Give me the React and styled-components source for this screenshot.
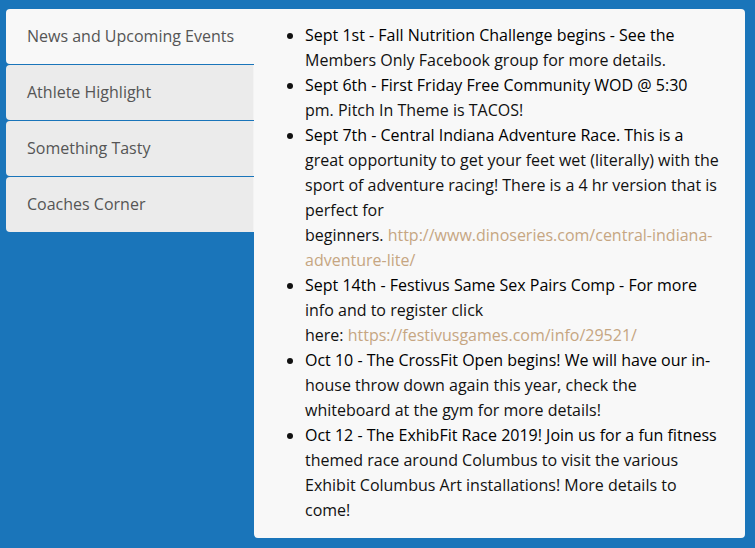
import React, { useState } from 'react'
import styled, { createGlobalStyle } from 'styled-components';

const GlobalStyle = createGlobalStyle`
  html, body {
    margin: 0;
    padding: 0;
    background: #1a75ba;
  }
  body {
    font-family: "Open Sans", "Noto Sans", sans-serif;
  }
`;

const Wrapper = styled.div`
  display: flex;
  align-items: flex-start;
  padding: 9px 10px 10px 6px;
  width: 755px;
  height: 548px;
  box-sizing: border-box;
`;

const TabList = styled.ul`
  list-style: none;
  margin: 0;
  padding: 0;
  width: 248px;
  flex-shrink: 0;
  display: flex;
  flex-direction: column;
  gap: 1px;
`;

const Tab = styled.li`
  height: 55px;
  display: flex;
  align-items: center;
  padding-left: 21px;
  padding-bottom: 1px;
  box-sizing: border-box;
  border-radius: 4px 0 0 4px;
  background: ${props => (props.$active ? '#f8f8f8' : '#ebebeb')};
  border-right: 1px solid ${props => (props.$active ? '#f8f8f8' : '#f3f3f3')};
  color: #555;
  font-size: 16px;
  cursor: pointer;
`;

const Panel = styled.div`
  flex: 1;
  background: #f8f8f8;
  border-radius: 0 4px 4px 4px;
  padding: 14px 26px 14px 51px;
  box-sizing: border-box;
  align-self: stretch;
`;

const EventList = styled.ul`
  margin: 0;
  padding: 0;
  list-style: disc outside;
  color: #111;
  font-size: 16px;
  line-height: 25px;
`;

const EventItem = styled.li`
  &::first-line {
    color: #000;
  }
`;

const Link = styled.a`
  color: #c6a682;
  text-decoration: none;
`;

const tabs = ['News and Upcoming Events', 'Athlete Highlight', 'Something Tasty', 'Coaches Corner'];

export default function App() {
  const [active, setActive] = useState(0);
  return (
    <>
      <GlobalStyle />
      <Wrapper>
        <TabList>
          {tabs.map((t, i) => (
            <Tab key={t} $active={i === active} onClick={() => setActive(i)}>{t}</Tab>
          ))}
        </TabList>
        <Panel>
          <EventList>
            <EventItem>Sept 1st - Fall Nutrition Challenge begins - See the Members Only Facebook group for more details.</EventItem>
            <EventItem>Sept 6th - First Friday Free Community WOD @ 5:30 pm. Pitch In Theme is TACOS!</EventItem>
            <EventItem>
              Sept 7th - Central Indiana Adventure Race. This is a great opportunity to get your feet wet (literally) with the sport of adventure racing! There is a 4 hr version that is perfect for<br />
              beginners. <Link href="#">http://www.dinoseries.com/central-indiana-adventure-lite/</Link>
            </EventItem>
            <EventItem>
              Sept 14th - Festivus Same Sex Pairs Comp - For more info and to register click<br />
              here: <Link href="#">https://festivusgames.com/info/29521/</Link>
            </EventItem>
            <EventItem>Oct 10 - The CrossFit Open begins! We will have our in-house throw down again this year, check the whiteboard at the gym for more details!</EventItem>
            <EventItem>Oct 12 - The ExhibFit Race 2019! Join us for a fun fitness themed race around Columbus to visit the various Exhibit Columbus Art installations! More details to come!</EventItem>
          </EventList>
        </Panel>
      </Wrapper>
    </>
  )
}
